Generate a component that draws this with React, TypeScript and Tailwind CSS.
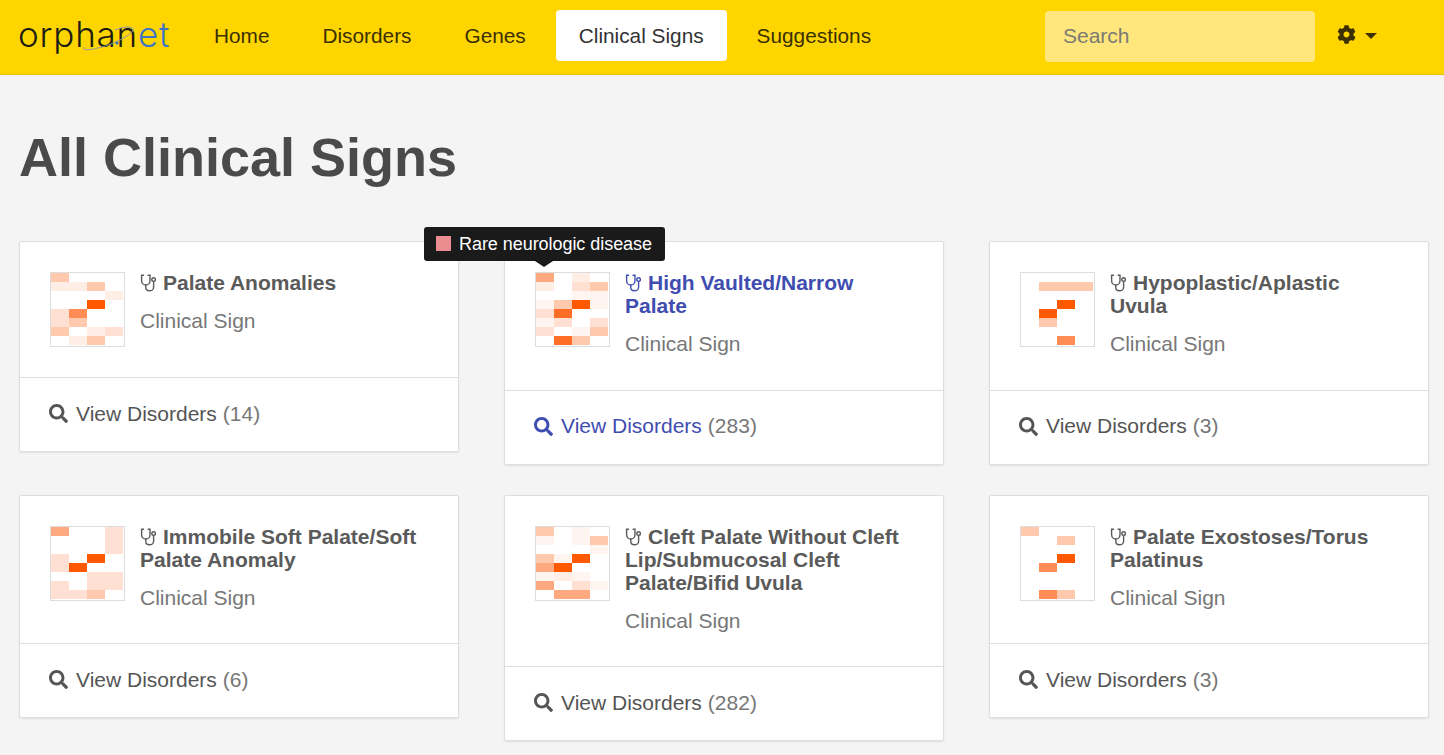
import { FaCog, FaSearch } from "react-icons/fa";

// heat map shades
const S: Record<string, string> = {
  ".": "transparent",
  a: "#fff5f0",
  h: "#ffeee6",
  b: "#ffe0d2",
  c: "#ffc9ae",
  g: "#ffa981",
  d: "#ff8c55",
  e: "#ff6d26",
  f: "#ff5900",
};

type Sign = {
  name: string;
  count: number;
  heat: string[];
  hover?: boolean;
};

const signs: Sign[] = [
  {
    name: "Palate Anomalies",
    count: 14,
    heat: ["c...", "hhc.", "...h", "..f.", "bd..", "bc..", "c.hb", ".hc."],
  },
  {
    name: "High Vaulted/Narrow Palate",
    count: 283,
    hover: true,
    heat: ["g.h.", "h.bc", "..aa", "acfa", "be..", "ab.b", "b.ac", ".ec."],
  },
  {
    name: "Hypoplastic/Aplastic Uvula",
    count: 3,
    heat: ["....", ".ccc", "....", "..f.", ".f..", ".c..", "....", "..d."],
  },
  {
    name: "Immobile Soft Palate/Soft Palate Anomaly",
    count: 6,
    heat: ["g..b", "...b", "...b", "b.f.", "bf..", "..bb", "b.bb", "bbc."],
  },
  {
    name: "Cleft Palate Without Cleft Lip/Submucosal Cleft Palate/Bifid Uvula",
    count: 282,
    heat: ["c.a.", "a.ac", "...a", "caf.", "gf..", "aha.", "g.ba", ".gg."],
  },
  {
    name: "Palate Exostoses/Torus Palatinus",
    count: 3,
    heat: ["c...", "..c.", "....", "..f.", ".d..", "....", "....", ".dc."],
  },
];

function HeatMap({ rows }: { rows: string[] }) {
  return (
    <div className="h-[75px] w-[75px] shrink-0 border border-[#dddddd] bg-white">
      <div className="grid grid-cols-[repeat(4,18px)] grid-rows-[repeat(8,9px)]">
        {rows.join("").split("").map((k, i) => (
          <div key={i} style={{ backgroundColor: S[k] }} />
        ))}
      </div>
    </div>
  );
}

function StethIcon() {
  return (
    <svg
      viewBox="0 0 18 18"
      fill="none"
      stroke="currentColor"
      strokeWidth="1.4"
      strokeLinecap="round"
      className="mr-[5px] inline-block h-[18px] w-[18px] align-[-2px]"
    >
      <path d="M3.5 1.2H1.6v5.2c0 2.8 2 4.6 4.2 4.6s4.2-1.8 4.2-4.6V1.2H8.1" />
      <path d="M5.8 11v2.6c0 1.9 1.5 3.2 3.6 3.2s4.2-1.3 4.2-3.6V7.6" />
      <circle cx="13.6" cy="5.6" r="1.8" />
    </svg>
  );
}

function Card({ sign }: { sign: Sign }) {
  return (
    <div className="relative rounded-[2px] border border-[#dedede] bg-white shadow-[0_1px_2px_rgba(0,0,0,0.08)]">
      {sign.hover && (
        <div className="absolute left-[-81px] top-[-15px] z-10 flex h-[34px] w-[241px] items-center rounded-[3px] bg-[#1a1a1a] pl-[12px] text-[18px] tracking-[-0.05px] text-white">
          <span className="mr-[8px] h-[15px] w-[15px] -translate-y-[1px] bg-[#ea8c90]" />
          <span className="pt-[1px]">Rare neurologic disease</span>
          <span className="absolute left-[111px] top-[34px] h-0 w-0 border-x-[9px] border-t-[6px] border-x-transparent border-t-[#1a1a1a]" />
        </div>
      )}
      <div className="flex gap-[15px] p-[30px]">
        <HeatMap rows={sign.heat} />
        <div className="min-w-0 flex-1">
          <h3
            className={`-mt-[1px] text-[21px] font-bold leading-[23px] ${
              sign.hover ? "text-[#3f4db0]" : "text-[#5a5a5a]"
            }`}
          >
            <StethIcon />
            {sign.name}
          </h3>
          <p className="mt-[11px] text-[21px] leading-[31.6px] text-[#777777]">Clinical Sign</p>
        </div>
      </div>
      <div className="flex h-[74px] items-center border-t border-[#dddddd] pb-[2px] pl-[29px] text-[21px]">
        <FaSearch
          size={19}
          className={`mr-[8px] ${sign.hover ? "text-[#3f4db0]" : "text-[#555555]"}`}
        />
        <span className={sign.hover ? "text-[#3f4db0]" : "text-[#555555]"}>View Disorders</span>
        <span className="ml-[6px] text-[#777777]">({sign.count})</span>
      </div>
    </div>
  );
}

export default function App() {
  const nav = ["Home", "Disorders", "Genes", "Clinical Signs", "Suggestions"];

  return (
    <div className="h-[755px] overflow-hidden bg-[#f4f4f4] font-['Liberation_Sans',sans-serif]">
      <header className="flex h-[75px] items-start border-b border-[#e8c200] bg-[#ffd500]">
        {/* logo */}
        <div className="relative ml-[18px] mt-[14px] h-[40px] w-[152px] font-['Inter',sans-serif] text-[35px] font-light leading-[40px] tracking-[0.8px] text-[#1c1c10]">
          orphan<span className="text-[#3f74c0]">et</span>
          <svg
            viewBox="0 0 152 40"
            className="absolute left-0 top-0 h-[40px] w-[152px]"
            fill="none"
          >
            <path
              d="M66 33c-2 4 6 3 14 1 14-3 34-13 35-18 1-4-8-4-18 0"
              stroke="#8f9aa8"
              strokeWidth="1"
            />
            <circle cx="99" cy="29" r="1.6" fill="#3f74c0" />
          </svg>
        </div>

        <nav className="ml-[21px] mt-[10px] flex gap-[7px]">
          {nav.map((n) => (
            <a
              key={n}
              className={`flex h-[51px] items-center rounded-[4px] px-[23px] text-[20.8px] ${
                n === "Clinical Signs" ? "bg-white text-[#333333]" : "text-[#3b3000]"
              }`}
            >
              {n}
            </a>
          ))}
        </nav>

        <div className="ml-auto mr-[67px] mt-[11px] flex items-start">
          <div className="flex h-[51px] w-[270px] items-center rounded-[4px] bg-[#ffe67d] pb-[2px] pl-[18px] text-[21px] text-[#7b7b74]">
            Search
          </div>
          <div className="ml-[22px] mt-[14px] flex items-center text-[#3b3000]">
            <FaCog size={19} />
            <span className="ml-[9px] mt-[2px] h-0 w-0 border-x-[6px] border-t-[6px] border-x-transparent border-t-[#3b3000]" />
          </div>
        </div>
      </header>

      <main className="px-[19px]">
        <h1 className="mb-[51px] mt-[50px] h-[65px] text-[54px] font-bold leading-[65px] text-[#4a4a4a]">
          All Clinical Signs
        </h1>
        <div className="grid grid-cols-[440px_440px_440px] items-start gap-x-[45px] gap-y-[30px]">
          {signs.map((s) => (
            <Card key={s.name} sign={s} />
          ))}
        </div>
      </main>
    </div>
  );
}
